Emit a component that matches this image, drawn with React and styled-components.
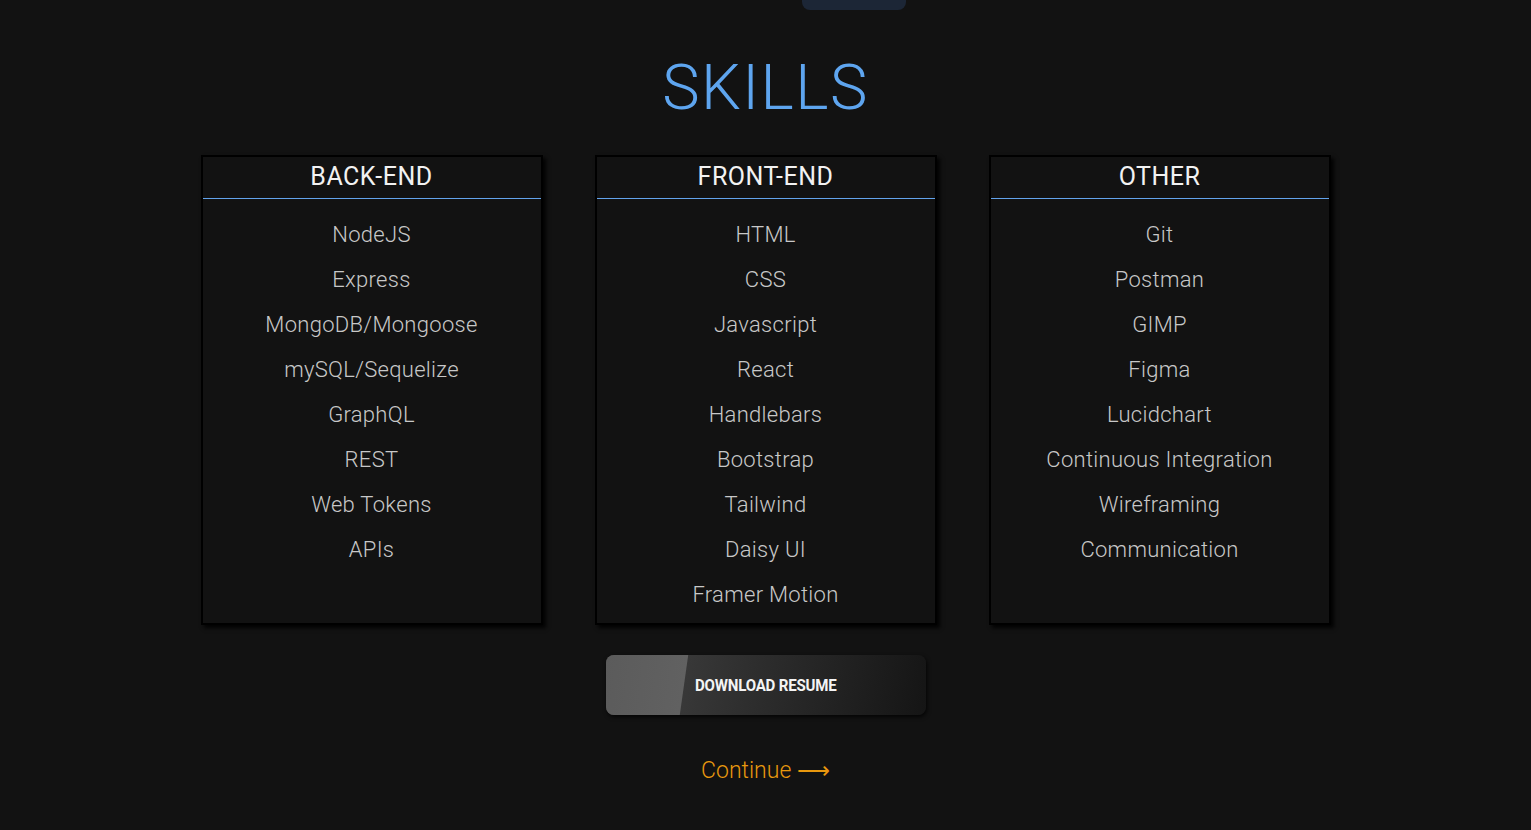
import React from "react";
import styled, { createGlobalStyle } from "styled-components";

const Global = createGlobalStyle`
  html, body { margin: 0; padding: 0; background: #121212; }
  body { font-family: "Roboto", "Liberation Sans", sans-serif; }
`;

const Page = styled.main`
  min-height: 830px;
  background: #121212;
  display: flex;
  flex-direction: column;
  align-items: center;
  position: relative;
`;

const TopTab = styled.div`
  width: 104px;
  height: 10px;
  background: #1c2636;
  border-radius: 0 0 8px 8px;
  margin-left: 177px;
`;

const Title = styled.h1`
  margin: 38px 0 0;
  font-family: "Roboto", sans-serif;
  font-weight: 300;
  font-size: 63px;
  line-height: 80px;
  letter-spacing: 1.5px;
  color: #5ea5ef;
`;

const Grid = styled.section`
  margin-top: 27px;
  display: grid;
  grid-template-columns: repeat(3, 342px);
  column-gap: 52px;
`;

const Card = styled.div`
  height: 470px;
  box-sizing: border-box;
  border: 2px solid #000;
  box-shadow: 3px 3px 4px rgba(0, 0, 0, 0.9);
  background: #121212;
  display: flex;
  flex-direction: column;
`;

const CardHeader = styled.h2`
  margin: 0;
  height: 42px;
  box-sizing: border-box;
  border-bottom: 1.5px solid #62a3ec;
  display: flex;
  align-items: center;
  justify-content: center;
  padding-bottom: 3px;
  font-weight: 400;
  font-size: 25px;
  color: #f2f2f2;
  letter-spacing: 0.5px;
`;

const List = styled.ul`
  list-style: none;
  margin: 0;
  padding: 22px 0 0;
  display: flex;
  flex-direction: column;
  gap: 17px;
`;

const Item = styled.li`
  text-align: center;
  font-weight: 300;
  font-size: 22px;
  line-height: 28px;
  letter-spacing: 0.3px;
  color: #c8c8c8;
`;

const ResumeButton = styled.a`
  margin-top: 30px;
  width: 320px;
  height: 60px;
  border-radius: 8px;
  position: relative;
  overflow: hidden;
  display: flex;
  align-items: center;
  background: linear-gradient(100deg, #444 0%, #2e2e2e 45%, #151515 100%);
  box-shadow: 1px 2px 4px rgba(0, 0, 0, 0.8);
  text-decoration: none;
  cursor: pointer;
  &::before {
    content: "";
    position: absolute;
    left: -20px;
    top: 0;
    width: 98px;
    height: 100%;
    background: linear-gradient(90deg, #5a5a5a, #616161);
    transform: skewX(-8deg);
  }
`;

const ButtonLabel = styled.span`
  position: relative;
  margin-left: 89px;
  font-family: "Roboto", sans-serif;
  font-weight: 700;
  font-size: 16px;
  letter-spacing: -0.2px;
  color: #f4f4f4;
  transform: scaleX(0.94);
  transform-origin: left center;
`;

const Continue = styled.a`
  margin-top: 42px;
  font-weight: 300;
  font-size: 23px;
  color: #e8980e;
  text-decoration: none;
`;

const columns = [
  {
    title: "BACK-END",
    items: ["NodeJS", "Express", "MongoDB/Mongoose", "mySQL/Sequelize", "GraphQL", "REST", "Web Tokens", "APIs"],
  },
  {
    title: "FRONT-END",
    items: ["HTML", "CSS", "Javascript", "React", "Handlebars", "Bootstrap", "Tailwind", "Daisy UI", "Framer Motion"],
  },
  {
    title: "OTHER",
    items: ["Git", "Postman", "GIMP", "Figma", "Lucidchart", "Continuous Integration", "Wireframing", "Communication"],
  },
];

export default function App() {
  return (
    <>
      <Global />
      <Page>
        <TopTab />
        <Title>SKILLS</Title>
        <Grid>
          {columns.map((c) => (
            <Card key={c.title}>
              <CardHeader>{c.title}</CardHeader>
              <List>
                {c.items.map((i) => (
                  <Item key={i}>{i}</Item>
                ))}
              </List>
            </Card>
          ))}
        </Grid>
        <ResumeButton>
          <ButtonLabel>DOWNLOAD RESUME</ButtonLabel>
        </ResumeButton>
        <Continue>Continue ⟶</Continue>
      </Page>
    </>
  );
}
